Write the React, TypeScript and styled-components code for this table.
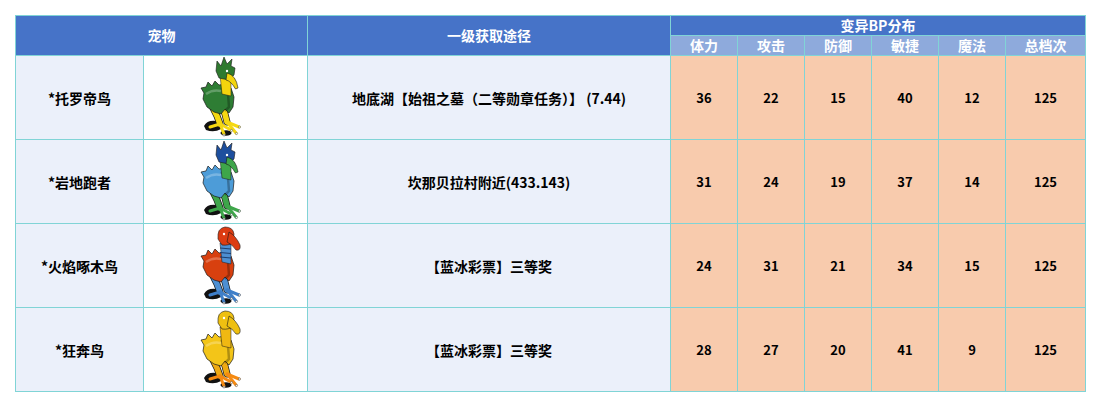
import React from "react";
import styled, { createGlobalStyle } from "styled-components";

const GlobalStyle = createGlobalStyle`
  html, body {
    margin: 0;
    padding: 0;
    background: #ffffff;
  }
  body {
    font-family: "Noto Sans CJK SC", "Noto Sans", sans-serif;
  }
`;

const Page = styled.div`
  padding: 15px 0 0 15px;
`;

const Table = styled.table`
  border-collapse: collapse;
  table-layout: fixed;
  width: 1071px;
  border: 1px solid #80d4d6;
`;

const Col = styled.col<{ $w: number }>`
  width: ${({ $w }) => $w}px;
`;

const HeadCell = styled.th<{ $sub?: boolean }>`
  border: 1px solid #80d4d6;
  background: ${({ $sub }) => ($sub ? "#8eaadc" : "#4673c8")};
  color: #ffffff;
  font-size: 14px;
  font-weight: 700;
  height: 19px;
  padding: 0;
  line-height: 19px;
  text-align: center;
`;

const Cell = styled.td<{ $tone: "light" | "white" | "peach" }>`
  border: 1px solid #80d4d6;
  background: ${({ $tone }) =>
    $tone === "light" ? "#ebf0fa" : $tone === "peach" ? "#f8cbad" : "#ffffff"};
  color: #000000;
  font-size: ${({ $tone }) => ($tone === "peach" ? "13px" : "14px")};
  font-weight: 700;
  height: 83px;
  padding: 0;
  text-align: center;
  vertical-align: middle;
`;

const BirdBox = styled.div`
  display: flex;
  justify-content: center;
  align-items: center;
  height: 83px;
  padding-right: 4px;
`;

interface BirdColors {
  head: string;
  beak: string;
  neck: string;
  body: string;
  legs: string;
  feet: string;
  crest: boolean;
  stripes?: boolean;
}

const Bird: React.FC<{ c: BirdColors }> = ({ c }) => (
  <svg width="60" height="84" viewBox="0 0 60 84">
    {/* shadow */}
    <path d="M10 70 Q13 64 22 65 Q29 67 27 73 Q20 77 12 74 Z" fill="#111" />
    <ellipse cx="32" cy="77" rx="5.5" ry="2.8" fill="#111" />
    {/* legs */}
    <path d="M18 50 L23 60 L26 68" stroke="#1a1a1a" strokeWidth="7" fill="none" strokeLinecap="round" />
    <path d="M18 50 L23 60 L26 68" stroke={c.legs} strokeWidth="5.5" fill="none" strokeLinecap="round" />
    <path d="M28 50 L31 58 L33 66" stroke="#1a1a1a" strokeWidth="7" fill="none" strokeLinecap="round" />
    <path d="M28 50 L31 58 L33 66" stroke={c.legs} strokeWidth="5.5" fill="none" strokeLinecap="round" />
    {/* feet */}
    <g stroke={c.feet} strokeWidth="3" fill="none" strokeLinecap="round">
      <path d="M26 68 L16 71" />
      <path d="M26 68 L30 78" />
      <path d="M26 68 L37 74" />
      <path d="M33 66 L45 71" />
      <path d="M33 66 L42 77" />
    </g>
    <g fill="#f4f4f4" stroke="#333" strokeWidth="0.4">
      <circle cx="45.5" cy="71" r="1.1" />
      <circle cx="42.5" cy="77.5" r="1.1" />
      <circle cx="30" cy="79" r="1.1" />
      <circle cx="37.5" cy="74.5" r="1.1" />
    </g>
    {/* body */}
    <path
      d="M7 32 L12 31 L14 26 L18 30 L21 25 L25 29 L31 28 L37 32 L40 41 L39 51 L35 57 L31 53 L27 58 L20 56 L13 51 L9 43 L10 37 Z"
      fill={c.body}
      stroke="#1a1a1a"
      strokeWidth="0.7"
    />
    <path d="M27 32 L34 38 L35 51 L31 55" stroke="rgba(0,0,0,0.28)" strokeWidth="2.5" fill="none" />
    <path d="M12 38 Q19 33 27 35" stroke="rgba(255,255,255,0.25)" strokeWidth="2.5" fill="none" />
    {/* neck */}
    <path d="M26 19 L37 20 L37 40 L28 38 Z" fill={c.neck} stroke="#1a1a1a" strokeWidth="0.5" />
    {c.stripes && (
      <g stroke="#1d3f70" strokeWidth="1.1">
        <path d="M26 24 L37 25" />
        <path d="M26 28.5 L37 29.5" />
        <path d="M26 33 L37 34" />
      </g>
    )}
    {/* head */}
    {c.crest ? (
      <path
        d="M22 15 L23 5 L27 10 L30 1 L33 8 L38 3 L37 10 L41 12 L40 19 L35 24 L25 22 Z"
        fill={c.head}
        stroke="#1a1a1a"
        strokeWidth="0.6"
      />
    ) : (
      <path
        d="M24 15 Q23 4 31 3 Q39 3 40 10 L39 18 Q35 22 28 21 Z"
        fill={c.head}
        stroke="#1a1a1a"
        strokeWidth="0.6"
      />
    )}
    {/* beak */}
    {c.crest ? (
      <path d="M33 17 Q42 19 44 32 L41.5 33 Q37 25 32 24 Z" fill={c.beak} stroke="#1a1a1a" strokeWidth="0.6" />
    ) : (
      <path d="M35 8 Q42 12 46 21 Q47 27 42 26 Q38 20 33 18 Z" fill={c.beak} stroke="#1a1a1a" strokeWidth="0.6" />
    )}
    <circle cx={c.crest ? 33 : 30} cy={c.crest ? 15 : 10} r="1.2" fill="#fff" />
  </svg>
);

interface Pet {
  name: string;
  route: string;
  stats: number[];
  colors: BirdColors;
}

const pets: Pet[] = [
  {
    name: "*托罗帝鸟",
    route: "地底湖【始祖之墓（二等勋章任务）】 (7.44)",
    stats: [36, 22, 15, 40, 12, 125],
    colors: { head: "#2f7a2f", beak: "#f3d40d", neck: "#f3d40d", body: "#2e7d34", legs: "#f5d812", feet: "#f5d812", crest: true },
  },
  {
    name: "*岩地跑者",
    route: "坎那贝拉村附近(433.143)",
    stats: [31, 24, 19, 37, 14, 125],
    colors: { head: "#1d4f9e", beak: "#3ea64a", neck: "#3ea64a", body: "#4d9cd8", legs: "#3ea64a", feet: "#3ea64a", crest: true },
  },
  {
    name: "*火焰啄木鸟",
    route: "【蓝冰彩票】三等奖",
    stats: [24, 31, 21, 34, 15, 125],
    colors: { head: "#dc3c12", beak: "#dc3c12", neck: "#4d8fd2", body: "#d8400f", legs: "#4d8fd2", feet: "#3f7fc8", crest: false, stripes: true },
  },
  {
    name: "*狂奔鸟",
    route: "【蓝冰彩票】三等奖",
    stats: [28, 27, 20, 41, 9, 125],
    colors: { head: "#eec011", beak: "#eec011", neck: "#f0b812", body: "#f3c518", legs: "#eeaa12", feet: "#f58a12", crest: false },
  },
];

const statNames = ["体力", "攻击", "防御", "敏捷", "魔法", "总档次"];
const colWidths = [128, 164, 363, 67, 67, 67, 67, 67, 80];

const App: React.FC = () => (
  <>
    <GlobalStyle />
    <Page>
      <Table>
        <colgroup>
          {colWidths.map((w, i) => (
            <Col key={i} $w={w} />
          ))}
        </colgroup>
        <thead>
          <tr>
            <HeadCell colSpan={2} rowSpan={2}>宠物</HeadCell>
            <HeadCell rowSpan={2}>一级获取途径</HeadCell>
            <HeadCell colSpan={6}>变异BP分布</HeadCell>
          </tr>
          <tr>
            {statNames.map((s) => (
              <HeadCell key={s} $sub>{s}</HeadCell>
            ))}
          </tr>
        </thead>
        <tbody>
          {pets.map((p) => (
            <tr key={p.name}>
              <Cell $tone="light">{p.name}</Cell>
              <Cell $tone="white">
                <BirdBox>
                  <Bird c={p.colors} />
                </BirdBox>
              </Cell>
              <Cell $tone="light">{p.route}</Cell>
              {p.stats.map((v, i) => (
                <Cell key={i} $tone="peach">{v}</Cell>
              ))}
            </tr>
          ))}
        </tbody>
      </Table>
    </Page>
  </>
);

export default App;
